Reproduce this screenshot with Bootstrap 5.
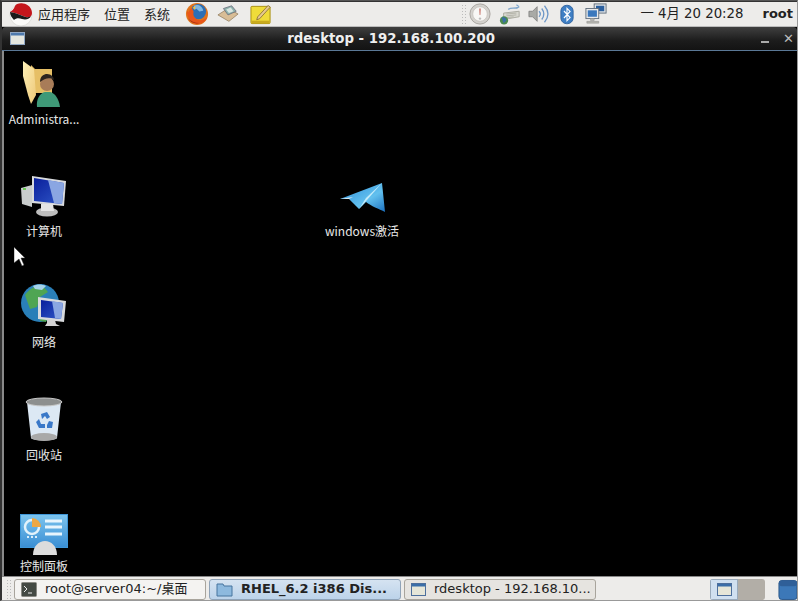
<!DOCTYPE html>
<html lang="zh-CN">
<head>
  <meta charset="UTF-8" />
  <title>rdesktop - 192.168.100.200</title>
  <link href="https://cdn.jsdelivr.net/npm/bootstrap@5.3.0/dist/css/bootstrap.min.css" rel="stylesheet" />
  <style>
    html, body { height: 100%; margin: 0; overflow: hidden; background: #000; }
    body { font-family: "DejaVu Sans", "Noto Sans CJK SC", sans-serif; font-size: 13px; color: #222; }
    svg { display: block; flex: none; }

    .screen { width: 798px; height: 601px; border-top: 1px solid #555; border-bottom: 1px solid #999; border-left: 2px solid #333; border-right: 1px solid #999; }

    .top-panel { height: 26px; background: #edecea; border-top: 1px solid #333; border-bottom: 1px solid #bbb; padding-left: 7px; }
    .menu-item { font-family: "Noto Sans CJK SC", sans-serif; font-size: 13px; white-space: nowrap; margin-left: 14px; }
    .menu-first { margin-left: 5px; }
    .launch-fox { margin-left: 15px; }
    .launch-box { margin-left: 8px; }
    .launch-note { margin-left: 11px; }
    .panel-grip { width: 5px; height: 20px; background-image: radial-gradient(#bbb 40%, transparent 45%); background-size: 3px 3px; }
    .tray-gauge { margin-left: 3px; }
    .tray-net { margin-left: 8px; }
    .tray-vol { margin-left: 7px; }
    .tray-bt { margin-left: 10px; }
    .tray-mon { margin-left: 11px; }
    .clock { font-size: 13.3px; white-space: nowrap; margin-left: 34px; }
    .user-name { font-size: 13px; font-weight: 700; white-space: nowrap; margin-left: 19px; margin-right: 4px; }

    .rd-window { min-height: 0; background: #000; }
    .title-bar { height: 24px; background: linear-gradient(#3f3f3f, #1c1c1c 60%, #131313); border-bottom: 1px solid #5a7896; border-radius: 4px 4px 0 0; padding: 0 3px 0 8px; color: #eee; flex: none; }
    .title-text { font-size: 13.3px; font-weight: 700; padding-right: 4px; }
    .win-min { width: 8px; height: 2px; background: #aaa; margin: 7px 14px 0 0; }
    .win-close { font-size: 13px; font-weight: 700; color: #bbb; line-height: 1; }

    .desk { background: #000; position: relative; overflow: hidden; border-left: 2px solid #8a8a8a; }
    .desk-icon { position: absolute; left: 0; width: 80px; color: #e8e8e8; font-size: 12px; text-align: center; font-family: "Noto Sans CJK SC", "DejaVu Sans", sans-serif; }
    .desk-icon svg { margin: 0 auto 4px; }
    .desk-label { display: block; line-height: 15px; white-space: nowrap; }
    .at-folder { top: 9px; }
    .at-folder svg { margin: 0 0 4px 18px; }
    .at-computer { top: 124px; }
    .at-computer svg { margin-bottom: 6px; }
    .at-network { top: 232px; }
    .at-trash { top: 346px; }
    .at-control { top: 463px; }
    .at-control svg { margin-bottom: 2px; }
    .at-plane { left: 318px; top: 131px; }
    .at-plane svg { margin-bottom: 10px; }
    .pointer { position: absolute; left: 10px; top: 196px; }

    .bottom-panel { height: 24px; background: #edecea; border-top: 1px solid #888; padding: 1px 0 0 4px; }
    .task-btn { width: 192px; height: 21px; border: 1px solid #a8a49c; border-radius: 3px; background: #f4f3f1; font-size: 13px; padding: 0 6px; white-space: nowrap; overflow: hidden; }
    .task-active { background: linear-gradient(#d5e3f1, #bcd3ea); border-color: #8fa3b8; font-weight: 700; }
    .task-other { background: #e6e4e0; }
    .pager { width: 55px; height: 21px; background: #b2aea7; border-radius: 3px; overflow: hidden; margin-right: 10px; }
    .pager-on { width: 28px; height: 21px; background: #d0e0f0; border: 1px solid #9ab; }
    .task-gap { gap: 3px; }
  </style>
</head>

<body>
  <div class="screen d-flex flex-column">

    <div class="top-panel d-flex align-items-center">
      <svg width="24" height="23" viewBox="0 0 24 23">
        <circle cx="12" cy="12" r="11" fill="#fbfbf9" stroke="#d0d0cc" stroke-width=".6" />
        <path d="M1 9c2-1 4-3 5-6 1-2 4-3 8-2.500C19 1 23 5 23 10c0 4-3 5-6 4-4-1-9-4-16-5z" fill="#c4161c" />
        <path d="M1 9c7 1 12 4 16 5 2 .5 4 0 5-1-1 3-5 4-9 3-3-1-6-1-8 1-2-2-4-5-4-8z" fill="#1a1a1a" />
      </svg>
      <span class="menu-item menu-first">应用程序</span>
      <span class="menu-item">位置</span>
      <span class="menu-item">系统</span>
      <svg width="24" height="24" viewBox="0 0 25 25" class="launch-fox">
        <circle cx="12.500" cy="12.500" r="11.500" fill="#e0741c" />
        <circle cx="14" cy="10" r="8" fill="#2c6fb5" />
        <path d="M9 4c4-2 9 0 10 5l-4 1-3-3-2 1z" fill="#7fb6e0" />
        <path d="M2 9c0 8 5 14 12 14 4 0 8-3 9-7-3 3-8 4-11 2-3-2-4-5-3-8L7 6C5 8 4 9 4 11z" fill="#e8561a" />
        <path d="M3 17c3 5 8 6 12 5-5 0-9-2-12-5z" fill="#a82c10" />
        <path d="M8 6l3-2-1 4z" fill="#f7c23c" />
      </svg>
      <svg width="22" height="20" viewBox="0 0 24 20" class="launch-box">
        <path d="M1 11l11-7 11 6-10 8z" fill="#d8bd96" stroke="#8d7a5c" stroke-width=".8" />
        <path d="M7 4l9-3 5 6-9 4z" fill="#8fb4ad" stroke="#667" stroke-width=".8" />
        <path d="M10 5l5-2 3 4-5 2z" fill="#d9e6e2" />
      </svg>
      <svg width="22" height="22" viewBox="0 0 23 22" class="launch-note">
        <rect x="1" y="3" width="20" height="18" rx="1" fill="#efdc3a" stroke="#a88f12" />
        <rect x="1.500" y="18" width="19" height="3" fill="#c9ab1e" />
        <path d="M8 14l11-12 2 2L10 16l-3 1z" fill="#e6c98f" stroke="#7b6532" stroke-width=".8" />
      </svg>

      <div class="panel-grip ms-auto"></div>
      <svg width="22" height="22" viewBox="0 0 24 24" class="tray-gauge">
        <circle cx="12" cy="12" r="11" fill="#d4d2ce" stroke="#a5a29d" />
        <circle cx="12" cy="12" r="8" fill="#f8f7f5" stroke="#c8c5c0" />
        <path d="M11.400 6h1.200l-.3 7h-.6z" fill="#b03a2e" />
        <circle cx="12" cy="17" r="1.300" fill="#bbb" />
      </svg>
      <svg width="22" height="22" viewBox="0 0 24 24" class="tray-net">
        <path d="M5 11l17-2v6L5 18z" fill="#d8d8d0" stroke="#a8a89e" />
        <path d="M8 12l11-1M8 14l11-1M8 16l8-1" stroke="#a8a89e" stroke-width=".8" />
        <path d="M10 7c4-3 6 0 12-3M22 4l-3-2M22 4l-3 2" fill="none" stroke="#7fa6cc" stroke-width="1.300" />
        <circle cx="5.500" cy="19" r="4.500" fill="#4b8a50" />
        <path d="M3 16c2-1 5 0 5 3l-3 3z" fill="#3b6ea8" />
      </svg>
      <svg width="22" height="22" viewBox="0 0 24 22" class="tray-vol">
        <path d="M1 8h4l5-5v16l-5-5H1z" fill="#a9aaa6" stroke="#777" stroke-width=".8" />
        <path d="M12 8c2 2 2 4 0 6M15 5c3 4 3 8 0 12M18 2c5 6 5 12 0 18" fill="none" stroke="#6d97c7" stroke-width="1.400" />
      </svg>
      <svg width="14" height="21" viewBox="0 0 16 23" class="tray-bt">
        <rect x="1" y="1" width="14" height="21" rx="6.500" fill="#3f7fc4" stroke="#2b5f9c" />
        <path d="M4.500 7.500l7 7.500L8 18.500V4.500L11.500 8l-7 7.500" fill="none" stroke="#fff" stroke-width="1.300" />
      </svg>
      <svg width="22" height="22" viewBox="0 0 24 24" class="tray-mon">
        <rect x="10" y="1" width="13" height="10" fill="#dfe3e6" stroke="#5f6d7c" />
        <rect x="12" y="3" width="9" height="6" fill="#2a5f9e" />
        <rect x="1" y="6" width="14" height="11" fill="#e8eaec" stroke="#5f6d7c" />
        <rect x="3" y="8" width="10" height="7" fill="#3a78bd" />
        <path d="M6 17h4v2H6zM2 20h13v2H2z" fill="#b9b9b2" stroke="#888" stroke-width=".5" />
      </svg>
      <span class="clock">一 4月 20 20:28</span>
      <span class="user-name">root</span>
    </div>

    <div class="rd-window flex-grow-1 d-flex flex-column">
      <div class="title-bar d-flex align-items-center">
        <svg width="15" height="13" viewBox="0 0 15 13">
          <rect x=".5" y=".5" width="14" height="12" fill="#e4e6df" stroke="#8fa6c2" />
          <rect x="1" y="1" width="13" height="2.500" fill="#4d79ad" />
        </svg>
        <span class="title-text flex-grow-1 text-center">rdesktop - 192.168.100.200</span>
        <span class="win-min"></span>
        <span class="win-close">✕</span>
      </div>

      <div class="desk flex-grow-1">
        <div class="desk-icon at-folder">
          <svg width="38" height="47" viewBox="0 0 38 47">
            <defs>
              <linearGradient id="leafFront" x1="0" y1="0" x2="1" y2="1">
                <stop offset="0" stop-color="#fdf0b8" />
                <stop offset="1" stop-color="#eec877" />
              </linearGradient>
            </defs>
            <path d="M9 5l4 4h17v24H9z" fill="#e6bf66" />
            <path d="M1 1l11 8 2 26-5 9-3-9-5-19z" fill="url(#leafFront)" />
            <path d="M15 47c-1-8 3-14 8-15h5c5 1 9 7 10 15z" fill="#3f9a78" />
            <circle cx="25" cy="24" r="7" fill="#a87c58" />
            <path d="M18 22c0-6 4-8 7-8 4 0 7 3 7 6-4-3-9-2-14 2z" fill="#2c2420" />
          </svg>
          <span class="desk-label">Administra...</span>
        </div>

        <div class="desk-icon at-computer">
          <svg width="46" height="42" viewBox="0 0 46 42">
            <defs>
              <linearGradient id="groundShine" x1="0" y1="0" x2="1" y2="1">
                <stop offset="0" stop-color="#0a1f9c" />
                <stop offset="1" stop-color="#3058c8" />
              </linearGradient>
            </defs>
            <path d="M0 13l11-3v22L1 29z" fill="#c9cdcd" />
            <path d="M11 1l34 5-2 25-32-3z" fill="#d8dadd" />
            <path d="M13 3l30 5-2 21-28-3z" fill="url(#groundShine)" />
            <path d="M27 5l16 3-2 21-8-1z" fill="#8aa6e2" />
            <ellipse cx="26" cy="37" rx="11" ry="4.500" fill="#bdbdbd" />
            <path d="M20 29h12l1 7H20z" fill="#e4e4e4" />
            <rect x="2" y="13" width="3" height="2" fill="#6fcc5a" />
          </svg>
          <span class="desk-label">计算机</span>
        </div>

        <div class="desk-icon at-network">
          <svg width="46" height="47" viewBox="0 0 46 47">
            <circle cx="19" cy="20" r="19" fill="#2a7fb8" />
            <path d="M4 12c5-7 12-10 18-9l5 6-8 5-3 10-7 2zM20 30l8 1-3 8-6-1z" fill="#4fa553" />
            <path d="M12 3c4-2 9-2 13 0l-4 4-7-1z" fill="#a6d3e8" />
            <path d="M17 14l28 4-2 21-26-3z" fill="#d8dadd" />
            <path d="M20 17l22 3-2 16-20-2z" fill="url(#groundShine)" />
            <path d="M31 18l11 2-2 16-6-1z" fill="#8aa6e2" />
            <path d="M26 36l8 1 1 4 4 2-15 0 2-3z" fill="#d4d4d4" />
          </svg>
          <span class="desk-label">网络</span>
        </div>

        <div class="desk-icon at-trash">
          <svg width="38" height="46" viewBox="0 0 38 46">
            <path d="M2 5l4 36c0 3 26 3 26 0l4-36z" fill="#dce8f4" />
            <ellipse cx="19" cy="5" rx="18" ry="4" fill="#8d8f8f" stroke="#c8c8c8" />
            <ellipse cx="19" cy="40" rx="13" ry="4" fill="#a9a9a9" />
            <path d="M16 17l6-2 3 5-3 2-2-3-3 3zM11 25l3-3 2 5 4 0 0 4-6 0zM24 24l4 1-1 6-5 0 0-3z" fill="#3a78c8" />
          </svg>
          <span class="desk-label">回收站</span>
        </div>

        <div class="desk-icon at-control">
          <svg width="48" height="42" viewBox="0 0 48 42">
            <defs>
              <linearGradient id="panelBlue" x1="0" y1="0" x2="0" y2="1">
                <stop offset="0" stop-color="#7cc4ee" />
                <stop offset="1" stop-color="#3b8fd4" />
              </linearGradient>
            </defs>
            <rect width="48" height="34" fill="#3f97d8" />
            <rect x="1" y="1" width="46" height="32" fill="url(#panelBlue)" />
            <circle cx="12" cy="13" r="7" fill="none" stroke="#e2f2fb" stroke-width="2.500" />
            <path d="M12 4a9 9 0 0 1 9 9h-9z" fill="#eda743" />
            <path d="M25 7h17M25 13h17M25 20h17" stroke="#e8f5fd" stroke-width="3" />
            <path d="M7 23h2M11 23h2M15 23h2" stroke="#d8eefc" stroke-width="2" />
            <path d="M13 41c0-9 6-14 12-14s12 5 12 14z" fill="#dcdcdc" />
          </svg>
          <span class="desk-label">控制面板</span>
        </div>

        <div class="desk-icon at-plane">
          <svg width="47" height="31" viewBox="0 0 47 31">
            <defs>
              <linearGradient id="planeBlue" x1="0" y1="0" x2="1" y2="1">
                <stop offset="0" stop-color="#2a8ad8" />
                <stop offset=".6" stop-color="#62c0ee" />
                <stop offset="1" stop-color="#1a70c0" />
              </linearGradient>
            </defs>
            <path d="M1 17L43 1l3 29c-6-3-14-6-19-10l-7 7-10-10z" fill="url(#planeBlue)" />
            <path d="M43 1L20 27l7-11z" fill="#c4ecfa" />
            <path d="M1 17l9 0 4-2z" fill="#d8e8f0" />
          </svg>
          <span class="desk-label">windows激活</span>
        </div>

        <svg class="pointer" width="12" height="19" viewBox="0 0 12 19">
          <path d="M0 0l11 11H7l3 7-2 1-3-7-5 4z" fill="#fff" stroke="#333" stroke-width=".5" />
        </svg>
      </div>
    </div>

    <div class="bottom-panel d-flex align-items-center task-gap">
      <div class="panel-grip"></div>
      <div class="task-btn d-flex align-items-center gap-2">
        <svg width="16" height="15" viewBox="0 0 16 15">
          <rect x=".5" y=".5" width="15" height="14" rx="1" fill="#444a44" stroke="#8a8a84" />
          <path d="M3 4l3 3-3 3M7 11h4" fill="none" stroke="#eee" />
        </svg>
        <span>root@server04:~/桌面</span>
      </div>
      <div class="task-btn task-active d-flex align-items-center gap-2">
        <svg width="17" height="15" viewBox="0 0 17 15">
          <path d="M1 2h6l1 2h8v10H1z" fill="#8db9de" stroke="#47749e" />
        </svg>
        <span>RHEL_6.2 i386 Dis...</span>
      </div>
      <div class="task-btn task-other d-flex align-items-center gap-2">
        <svg width="15" height="13" viewBox="0 0 15 13">
          <rect x=".5" y=".5" width="14" height="12" fill="#e6e6d8" stroke="#4d6f9c" />
          <rect x="1" y="1" width="13" height="2.500" fill="#3b6ea8" />
        </svg>
        <span>rdesktop - 192.168.10...</span>
      </div>
      <div class="pager d-flex ms-auto">
        <div class="pager-on d-flex align-items-center justify-content-center">
          <svg width="15" height="13" viewBox="0 0 15 13">
            <rect x=".5" y=".5" width="14" height="12" fill="#e6e6d8" stroke="#4d6f9c" />
            <rect x="1" y="1" width="13" height="2.500" fill="#3b6ea8" />
          </svg>
        </div>
      </div>
      <svg width="19" height="21" viewBox="0 0 20 21">
        <rect x="1" y="1" width="19" height="20" rx="3" fill="#3c78b8" stroke="#2a5688" />
        <rect x="1" y="1" width="19" height="6" rx="3" fill="#2f5f98" />
      </svg>
    </div>
  </div>
  <script src="https://cdn.jsdelivr.net/npm/bootstrap@5.3.0/dist/js/bootstrap.bundle.min.js"></script>
</body>
</html>
